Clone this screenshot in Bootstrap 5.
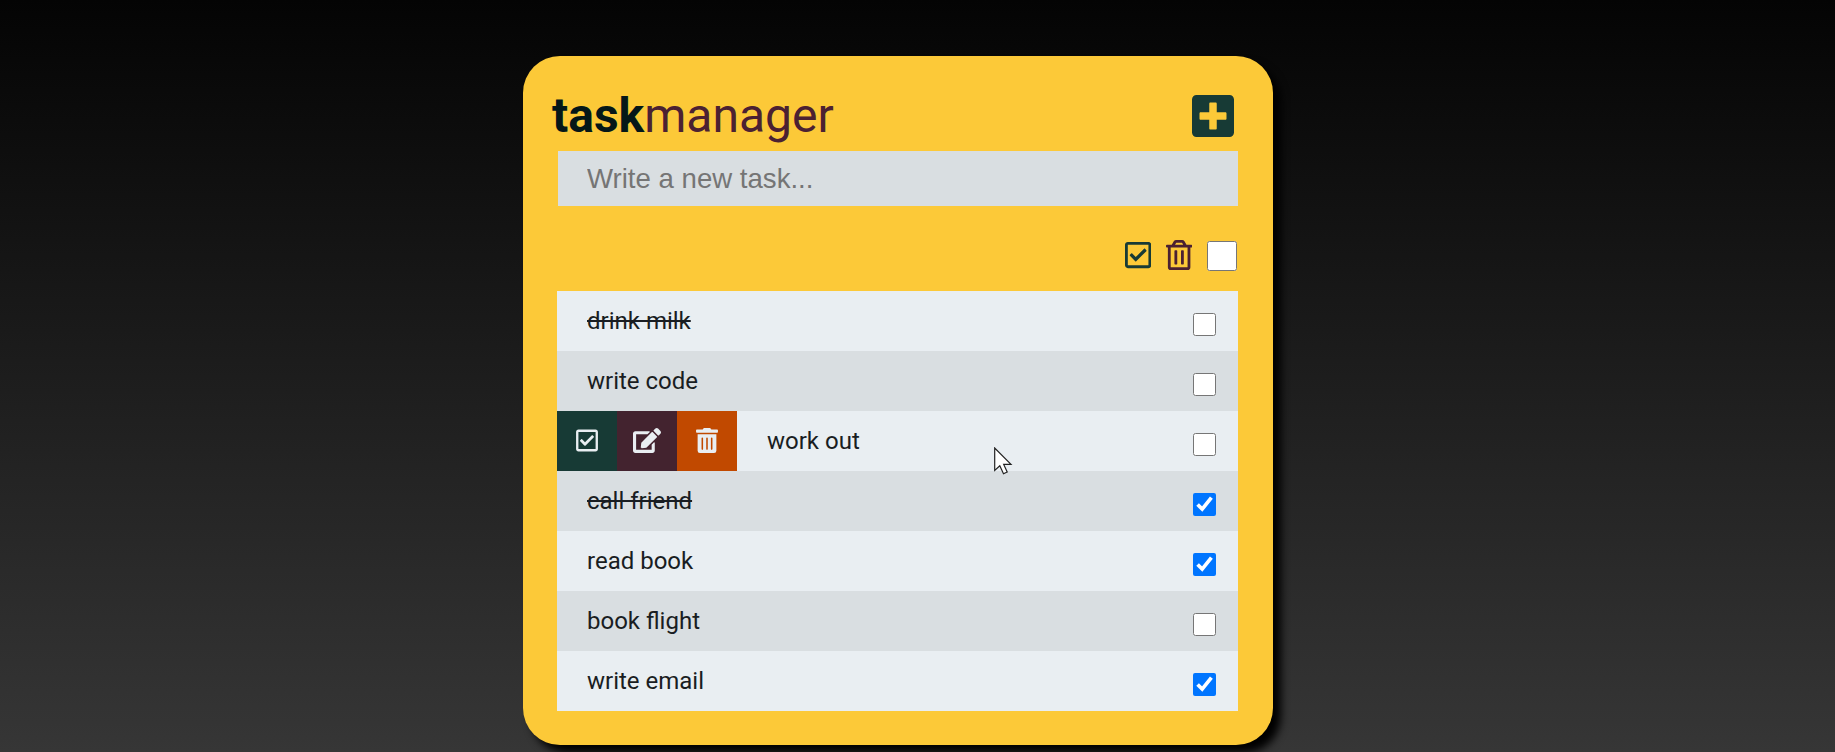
<!DOCTYPE html>
<html lang="en">
<head>
<meta charset="utf-8">
<meta name="viewport" content="width=device-width, initial-scale=1">
<title>taskmanager</title>
<link rel="stylesheet" href="https://cdn.jsdelivr.net/npm/bootstrap@5.3.0/dist/css/bootstrap.min.css">
<style>
body{min-height:100vh;overflow:hidden;padding-right:39px;font-family:Roboto,"Liberation Sans",sans-serif;color:#191d22;background:linear-gradient(#040404,#363636) no-repeat}
.manager{width:750px;height:689px;margin-top:56px;padding:36px 35px 34px 34px;background:#fcc938;border-radius:37px;box-shadow:8px 8px 8px #000}
.title-bar{height:59px;padding-right:4.5px}
.title-bar h1{font-size:48px;line-height:48px;font-weight:400;color:#4b2132;margin-left:-5px}
.title-bar b{font-weight:700;color:#051718}
.fa{fill:currentColor;display:block;flex:none}
.forest{color:#173a35}
.wine{color:#4b2132}
.new-task{height:55px;margin-left:1px;width:680px;padding:0 29px;border:0;border-radius:0;background:#d9dee1;font:27.6px "Liberation Sans",sans-serif;outline:0}
.new-task::placeholder{color:#757575;opacity:1}
.tools{height:85px;padding:14px 1px 0 0;gap:15px}
.tools svg{margin-bottom:2px}
.tools input{width:30px;height:30px;margin:0}
.task{height:60px;background:#e9eef2;font-size:24px}
.task:nth-child(even){background:#d9dee1}
.task span{margin-left:30px}
.task input{width:23px;height:23px;margin:7px 22px 0 auto}
.done{text-decoration:line-through}
.act{width:60px;height:60px;border:0;padding:0 0 2px;color:#e9eef2}
.bg-forest{background:#173a35}.bg-wine{background:#43232f}.bg-rust{background:#c14900}
.pointer{left:994px;top:447px}
</style>
</head>
<body>
<svg class="d-none" aria-hidden="true">
<symbol id="plus" viewBox="0 0 448 512"><path d="M400 32H48C21.500 32 0 53.500 0 80v352c0 26.500 21.500 48 48 48h352c26.500 0 48-21.500 48-48V80c0-26.500-21.500-48-48-48zm-32 252c0 6.600-5.400 12-12 12h-92v92c0 6.600-5.400 12-12 12h-56c-6.600 0-12-5.400-12-12v-92H92c-6.600 0-12-5.400-12-12v-56c0-6.600 5.400-12 12-12h92v-92c0-6.600 5.400-12 12-12h56c6.600 0 12 5.400 12 12v92h92c6.600 0 12 5.400 12 12v56z"/></symbol>
<symbol id="check" viewBox="0 0 448 512"><path d="M400 32H48C21.490 32 0 53.490 0 80v352c0 26.510 21.490 48 48 48h352c26.510 0 48-21.490 48-48V80c0-26.510-21.490-48-48-48zm0 400H48V80h352v352zm-35.864-241.724L191.547 361.480c-4.705 4.667-12.303 4.637-16.970-.068l-90.781-91.516c-4.667-4.705-4.637-12.303.069-16.971l22.719-22.536c4.705-4.667 12.303-4.637 16.970.069l59.792 60.277 141.352-140.216c4.705-4.667 12.303-4.637 16.970.068l22.536 22.718c4.667 4.706 4.637 12.304-.068 16.971z"/></symbol>
<symbol id="trash" viewBox="0 0 448 512"><path d="M268 416h24a12 12 0 0 0 12-12V188a12 12 0 0 0-12-12h-24a12 12 0 0 0-12 12v216a12 12 0 0 0 12 12zM432 80h-82.410l-34-56.700A48 48 0 0 0 274.410 0H173.590a48 48 0 0 0-41.160 23.300L98.410 80H16A16 16 0 0 0 0 96v16a16 16 0 0 0 16 16h16v336a48 48 0 0 0 48 48h288a48 48 0 0 0 48-48V128h16a16 16 0 0 0 16-16V96a16 16 0 0 0-16-16zM171.840 50.910A6 6 0 0 1 177 48h94a6 6 0 0 1 5.150 2.910L293.610 80H154.390zM368 464H80V128h288zm-212-48h24a12 12 0 0 0 12-12V188a12 12 0 0 0-12-12h-24a12 12 0 0 0-12 12v216a12 12 0 0 0 12 12z"/></symbol>
<symbol id="edit" viewBox="0 0 576 512"><path d="M402.600 83.200l90.200 90.200c3.800 3.800 3.800 10 0 13.800L274.400 405.600l-92.800 10.300c-12.400 1.400-22.900-9.100-21.500-21.500l10.300-92.800L388.800 83.200c3.800-3.800 10-3.800 13.800 0zm162-22.900l-48.800-48.800c-15.200-15.200-39.900-15.200-55.200 0l-35.400 35.400c-3.800 3.800-3.800 10 0 13.800l90.200 90.200c3.800 3.800 10 3.800 13.800 0l35.400-35.400c15.200-15.300 15.200-40 0-55.200zM384 346.200V448H64V128h229.800c3.200 0 6.200-1.300 8.500-3.500l40-40c7.600-7.600 2-20.500-8.500-20.500H48C21.500 64 0 85.500 0 112v352c0 26.500 21.500 48 48 48h352c26.500 0 48-21.500 48-48V306.200c0-10.700-12.900-16-20.500-8.500l-40 40c-2.200 2.300-3.500 5.300-3.500 8.500z"/></symbol>
<symbol id="bin" viewBox="0 0 448 512"><path d="M32 464a48 48 0 0 0 48 48h288a48 48 0 0 0 48-48V128H32zm272-256a16 16 0 0 1 32 0v224a16 16 0 0 1-32 0zm-96 0a16 16 0 0 1 32 0v224a16 16 0 0 1-32 0zm-96 0a16 16 0 0 1 32 0v224a16 16 0 0 1-32 0zM432 32H312l-9.400-18.700A24 24 0 0 0 281.100 0H166.800a23.720 23.720 0 0 0-21.400 13.300L136 32H16A16 16 0 0 0 0 48v32a16 16 0 0 0 16 16h416a16 16 0 0 0 16-16V48a16 16 0 0 0-16-16z"/></symbol>
</svg>
<main class="manager mx-auto d-flex flex-column">
  <header class="title-bar d-flex justify-content-between align-items-start">
    <h1 class="mb-0"><b>task</b>manager</h1>
    <svg class="fa forest" width="42" height="48"><use href="#plus"/></svg>
  </header>
  <input class="new-task" type="text" placeholder="Write a new task..." aria-label="New task">
  <div class="tools d-flex justify-content-end align-items-center">
    <svg class="fa forest" width="26.25" height="30"><use href="#check"/></svg>
    <svg class="fa wine" width="26.25" height="30"><use href="#trash"/></svg>
    <input type="checkbox" aria-label="Select all">
  </div>
  <ul class="list-unstyled mb-0">
    <li class="task d-flex align-items-center"><span class="done">drink milk</span><input type="checkbox"></li>
    <li class="task d-flex align-items-center"><span>write code</span><input type="checkbox"></li>
    <li class="task d-flex align-items-center">
      <button class="act bg-forest d-flex align-items-center justify-content-center" aria-label="Complete"><svg class="fa" width="22" height="25"><use href="#check"/></svg></button>
      <button class="act bg-wine d-flex align-items-center justify-content-center" aria-label="Edit"><svg class="fa" width="28" height="25"><use href="#edit"/></svg></button>
      <button class="act bg-rust d-flex align-items-center justify-content-center" aria-label="Delete"><svg class="fa" width="22" height="25"><use href="#bin"/></svg></button>
      <span>work out</span><input type="checkbox"></li>
    <li class="task d-flex align-items-center"><span class="done">call friend</span><input type="checkbox" checked></li>
    <li class="task d-flex align-items-center"><span>read book</span><input type="checkbox" checked></li>
    <li class="task d-flex align-items-center"><span>book flight</span><input type="checkbox"></li>
    <li class="task d-flex align-items-center"><span>write email</span><input type="checkbox" checked></li>
  </ul>
</main>
<svg class="pointer position-absolute" width="19" height="28" viewBox="0 0 19 28"><path d="M.7 1V23.500L5.800 18.800 9.500 26.700 13.200 25 9.700 17.400H17Z" fill="#fff" stroke="#222" stroke-width="1.200"/></svg>
<script src="https://cdn.jsdelivr.net/npm/bootstrap@5.3.0/dist/js/bootstrap.bundle.min.js"></script>
</body>
</html>
